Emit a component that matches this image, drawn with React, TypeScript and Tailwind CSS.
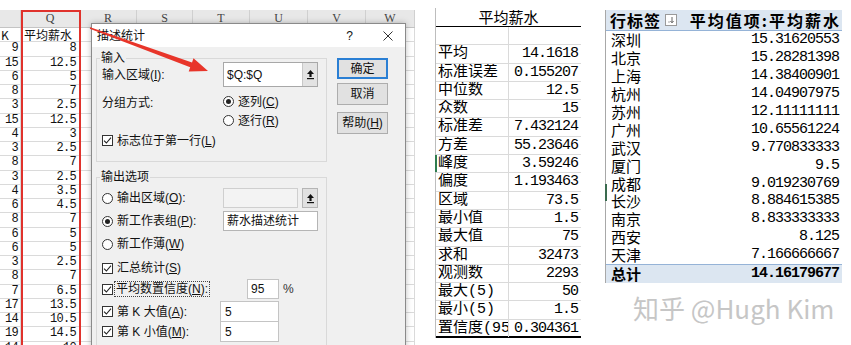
import React from 'react';

// sheet data: column P tail and column Q (平均薪水)
const sheetRows: [string, string][] = [
  ['9', '8'], ['15', '12.5'], ['6', '5'], ['8', '7'], ['3', '2.5'], ['15', '12.5'],
  ['4', '3'], ['3', '2.5'], ['8', '7'], ['3', '2.5'], ['4', '3.5'], ['6', '4.5'],
  ['8', '7'], ['6', '5'], ['6', '5'], ['3', '2.5'], ['8', '7'], ['7', '6.5'],
  ['17', '13.5'], ['14', '10.5'], ['19', '14.5'], ['14', '10'],
];

const restCols = ['w-[57px]', 'w-[56px]', 'w-[57px]', 'w-[58px]', 'w-[58px]', 'w-[49px]'];
const letters = ['R', 'S', 'T', 'U', 'V', 'W'];

const stats: [string, string][] = [
  ['平均', '14.1618'], ['标准误差', '0.155207'], ['中位数', '12.5'], ['众数', '15'],
  ['标准差', '7.432124'], ['方差', '55.23646'], ['峰度', '3.59246'], ['偏度', '1.193463'],
  ['区域', '73.5'], ['最小值', '1.5'], ['最大值', '75'], ['求和', '32473'],
  ['观测数', '2293'], ['最大(5)', '50'], ['最小(5)', '1.5'], ['置信度(95.0%)', '0.304361'],
];

const cities: [string, string][] = [
  ['深圳', '15.31620553'], ['北京', '15.28281398'], ['上海', '14.38400901'], ['杭州', '14.04907975'],
  ['苏州', '12.11111111'], ['广州', '10.65561224'], ['武汉', '9.770833333'], ['厦门', '9.5'],
  ['成都', '9.019230769'], ['长沙', '8.884615385'], ['南京', '8.833333333'], ['西安', '8.125'],
  ['天津', '7.166666667'],
];

const cjk = "font-['Noto_Sans_CJK_SC',sans-serif]";
const ui = "font-['Liberation_Sans','Noto_Sans_CJK_SC',sans-serif]";
const mono = "font-['Liberation_Mono',monospace]";
const monoCjk = "font-['Liberation_Mono','Noto_Sans_CJK_SC',monospace]";

const SheetRow = ({ a, b, head }: { a: string; b: string; head?: boolean }) => (
  <div className="flex h-[14.25px] border-b border-[#dadada] leading-[13px]">
    <div className={`w-[21px] shrink-0 border-r border-[#dadada] overflow-hidden ${head ? `${cjk} text-[12px] pl-[1px]` : `${mono} text-[12px] tracking-[-0.7px] text-right pr-[2px]`}`}>{a}</div>
    <div className={`w-[59px] shrink-0 border-r border-[#dadada] ${head ? `${cjk} text-[12px] pl-[3px]` : `${mono} text-[12px] tracking-[-0.7px] text-right pr-[3px]`}`}>{b}</div>
    {restCols.map((w, i) => (
      <div key={i} className={`${w} shrink-0 border-r border-[#dadada]`} />
    ))}
  </div>
);

const CheckBox = () => (
  <span className="w-[11px] h-[11px] border border-[#333] bg-white flex items-center justify-center shrink-0">
    <svg width="9" height="9" viewBox="0 0 9 9">
      <path d="M1 4.6 L3.4 7 L8 1.6" fill="none" stroke="#222" strokeWidth="1.1" />
    </svg>
  </span>
);

const Radio = ({ on }: { on?: boolean }) => (
  <span className="w-[11px] h-[11px] rounded-full border border-[#333] bg-white flex items-center justify-center shrink-0">
    {on && <span className="w-[5px] h-[5px] rounded-full bg-[#222]" />}
  </span>
);

const UpIcon = () => (
  <svg width="9" height="11" viewBox="0 0 9 11">
    <path d="M4.5 1 L8 5 H5.6 V8 H3.4 V5 H1 Z" fill="#111" />
    <rect x="1" y="9" width="7" height="1.2" fill="#111" />
  </svg>
);

function Dialog() {
  return (
    <div className={`absolute left-[91px] top-[23px] w-[315px] h-[340px] border border-[#8a8a8a] bg-[#f0f0f0] shadow-[0_0_6px_rgba(0,0,0,0.25)] flex flex-col ${ui} text-[12px] text-[#111]`}>
      <div className="h-[23px] bg-white flex items-center pl-[5px] pr-[12px] shrink-0">
        <span>描述统计</span>
        <span className="ml-auto">?</span>
        <svg className="ml-[30px]" width="10" height="10" viewBox="0 0 10 10">
          <path d="M0.5 0.5 L9.5 9.5 M9.5 0.5 L0.5 9.5" stroke="#333" strokeWidth="1" />
        </svg>
      </div>
      <div className="flex pl-[4px]">
        <div className="w-[231px] shrink-0 pt-[7px]">
          <fieldset className="border border-[#d9d9d9] pb-[11px]">
            <legend className="leading-[8px] ml-[3px] px-[1px]">输入</legend>
            <div className="pl-[5px]">
              <div className="flex items-center h-[25px]">
                <span className="w-[121px] shrink-0">输入区域(<u>I</u>):</span>
                <div className="w-[95px] h-[25px] bg-white border border-[#a8a8a8] flex items-center pl-[3px]">
                  <span>$Q:$Q</span>
                  <span className="ml-auto w-[15px] h-[23px] bg-[#e3e3e3] border-l border-[#c8c8c8] flex items-center justify-center">
                    <UpIcon />
                  </span>
                </div>
              </div>
              <div className="flex mt-[5px]">
                <span className="w-[121px] shrink-0 h-[19px] flex items-center pt-[3px]">分组方式:</span>
                <div className="flex flex-col">
                  <span className="h-[19px] flex items-center gap-[4px]"><Radio on /><span>逐列(<u>C</u>)</span></span>
                  <span className="h-[19px] flex items-center gap-[4px]"><Radio /><span>逐行(<u>R</u>)</span></span>
                </div>
              </div>
              <div className="h-[19px] mt-[1px] flex items-center gap-[4px]">
                <CheckBox /><span>标志位于第一行(<u>L</u>)</span>
              </div>
            </div>
          </fieldset>

          <fieldset className="border border-[#d9d9d9] mt-[11px] h-[200px]">
            <legend className="leading-[8px] ml-[3px] px-[1px]">输出选项</legend>
            <div className="pl-[5px]">
              <div className="flex items-center h-[20px] mt-[7px]">
                <span className="w-[121px] shrink-0 flex items-center gap-[4px]"><Radio /><span>输出区域(<u>O</u>):</span></span>
                <div className="w-[75px] h-[20px] border border-[#cfcfcf] bg-[#f3f3f3]" />
                <span className="ml-[4px] w-[16px] h-[20px] bg-[#e1e1e1] border border-[#b5b5b5] flex items-center justify-center">
                  <UpIcon />
                </span>
              </div>
              <div className="flex items-center h-[20px] mt-[3px]">
                <span className="w-[121px] shrink-0 flex items-center gap-[4px]"><Radio on /><span>新工作表组(<u>P</u>):</span></span>
                <div className="w-[95px] h-[20px] border border-[#b5b5b5] bg-white flex items-center pl-[3px]">薪水描述统计</div>
              </div>
              <div className="flex items-center h-[20px] mt-[3px] gap-[4px]">
                <Radio /><span>新工作薄(<u>W</u>)</span>
              </div>
              <div className="flex items-center h-[20px] mt-[4px] gap-[4px]">
                <CheckBox /><span>汇总统计(<u>S</u>)</span>
              </div>
              <div className="flex items-center h-[20px] mt-[1px]">
                <span className="w-[145px] shrink-0 flex items-center gap-[1px]">
                  <CheckBox />
                  <span className="border border-dotted border-[#444] px-[1px] leading-[14px]">平均数置信度(<u>N</u>):</span>
                </span>
                <div className="w-[32px] h-[20px] border border-[#c4c4c4] bg-white flex items-center pl-[3px]">95</div>
                <span className="ml-[4px] text-[#333]">%</span>
              </div>
              <div className="flex items-center h-[21px] mt-[2px]">
                <span className="w-[118px] shrink-0 flex items-center gap-[4px]"><CheckBox /><span>第 K 大值(<u>A</u>):</span></span>
                <div className="w-[59px] h-[21px] border border-[#c4c4c4] bg-white flex items-center pl-[4px]">5</div>
              </div>
              <div className="flex items-center h-[21px] -mt-[1px]">
                <span className="w-[118px] shrink-0 flex items-center gap-[4px]"><CheckBox /><span>第 K 小值(<u>M</u>):</span></span>
                <div className="w-[59px] h-[21px] border border-[#c4c4c4] bg-white flex items-center pl-[4px]">5</div>
              </div>
            </div>
          </fieldset>
        </div>

        <div className="ml-[10px] pt-[11px] flex flex-col">
          <button className="w-[51px] h-[21px] bg-[#e1e1e1] border-2 border-[#2a7fd4] leading-[16px]">确定</button>
          <button className="w-[51px] h-[22px] mt-[4px] bg-[#e1e1e1] border border-[#adadad]">取消</button>
          <button className="w-[51px] h-[22px] mt-[7px] bg-[#e1e1e1] border border-[#adadad]">帮助(<u>H</u>)</button>
        </div>
      </div>
    </div>
  );
}

function Sheet() {
  return (
    <div className="relative w-[415px] h-[345px] shrink-0 overflow-hidden bg-white text-[#111]">
      <div className="h-[10px]" />
      <div className="flex h-[18px] bg-[#e8e8e8] border-b border-[#c4c4c4] font-['Liberation_Serif',serif] text-[12px] text-[#444] leading-[17px]">
        <div className="w-[21px] shrink-0 border-r border-[#d0d0d0]" />
        <div className="w-[59px] shrink-0 border-r border-[#d0d0d0] text-center">Q</div>
        {letters.map((l, i) => (
          <div key={l} className={`${restCols[i]} shrink-0 border-r border-[#d0d0d0] text-center`}>{l}</div>
        ))}
      </div>
      <SheetRow a="K" b="平均薪水" head />
      {sheetRows.map(([a, b], i) => (
        <SheetRow key={i} a={a} b={b} />
      ))}

      {/* highlight on column Q */}
      <div className="absolute left-[21px] top-[10px] w-[60px] h-[345px] border-2 border-[#e0322c]" />

      <Dialog />

      <svg className="absolute left-0 top-0 pointer-events-none" width="415" height="345" viewBox="0 0 415 345">
        <polygon
          points="90.2,27.3 192,62.4 193.5,58.2 208,71 188.7,71.4 190.2,67.2 89.8,28.7"
          fill="#e8352a"
        />
      </svg>
    </div>
  );
}

function Stats() {
  return (
    <div className="ml-[20px] w-[146px] shrink-0 pt-[8px] text-black">
      <div className="border-l border-[#bdbdbd] relative">
        <div className={`h-[19px] border-b border-black text-center ${cjk} text-[15px] leading-[18px]`}>平均薪水</div>
        <div className="h-[18.3px] grid grid-cols-[72px_73px] border-b border-[#dadada]">
          <div />
          <div className="border-l border-[#dadada]" />
        </div>
        {stats.map(([k, v], i) => (
          <div
            key={k}
            className={`h-[18.3px] grid grid-cols-[72px_73px] leading-[17px] ${i === stats.length - 1 ? 'border-b-2 border-black' : 'border-b border-[#dadada]'}`}
          >
            <div className={`${monoCjk} text-[15px] pl-[2px] whitespace-nowrap overflow-hidden`}>{k}</div>
            <div className={`border-l border-[#dadada] ${mono} text-[15px] tracking-[-1px] text-right pr-[3px]`}>{v}</div>
          </div>
        ))}
        <div className="absolute -left-[1px] top-[147px] w-[2px] h-[17px] bg-[#2e7d4f]" />
      </div>
    </div>
  );
}

function Pivot() {
  return (
    <div className="ml-[24px] w-[237px] shrink-0 pt-[10px] text-black">
      <div className="border-l border-[#a8a8a8] relative">
        <div className={`h-[21px] bg-[#dce6f1] border-b border-[#95b3d7] flex items-center pl-[4px] pr-[3px] ${cjk} text-[16px] font-bold leading-[18px]`}>
          <span className="tracking-[1px]">行标签</span>
          <span className="ml-[4px] w-[12px] h-[12px] border border-[#9a9a9a] bg-white flex items-center justify-center">
            <svg width="8" height="8" viewBox="0 0 8 8">
              <path d="M5 1 V6.5 M3.4 5 L5 6.8 L6.6 5" fill="none" stroke="#555" strokeWidth="0.9" />
              <rect x="1.5" y="5.5" width="1" height="1" fill="#555" />
            </svg>
          </span>
          <span className="ml-auto tracking-[2px] -mr-[2px]">平均值项:平均薪水</span>
        </div>
        {cities.map(([c, v]) => (
          <div key={c} className="h-[17.9px] flex items-center justify-between pl-[5px] pr-[3px]">
            <span className={`${cjk} text-[15px] leading-[17px]`}>{c}</span>
            <span className={`${mono} text-[15px] tracking-[-1px] leading-[17px]`}>{v}</span>
          </div>
        ))}
        <div className="h-[19px] bg-[#dce6f1] border-t border-[#95b3d7] flex items-center justify-between pl-[5px] pr-[3px] font-bold">
          <span className={`${cjk} text-[15px] leading-[17px]`}>总计</span>
          <span className={`${mono} text-[15px] tracking-[-1px] leading-[17px]`}>14.16179677</span>
        </div>
        <div className="absolute -left-[1px] top-[174px] w-[2px] h-[17px] bg-[#3a6b4f]" />
      </div>
      <div className={`mt-[10px] pl-[28px] ${cjk} text-[26px] leading-[30px] text-[#c6c6c6] whitespace-nowrap`}>知乎 @Hugh Kim</div>
    </div>
  );
}

export default function App() {
  return (
    <div className="w-[851px] h-[345px] bg-white flex overflow-hidden">
      <Sheet />
      <Stats />
      <Pivot />
    </div>
  );
}
